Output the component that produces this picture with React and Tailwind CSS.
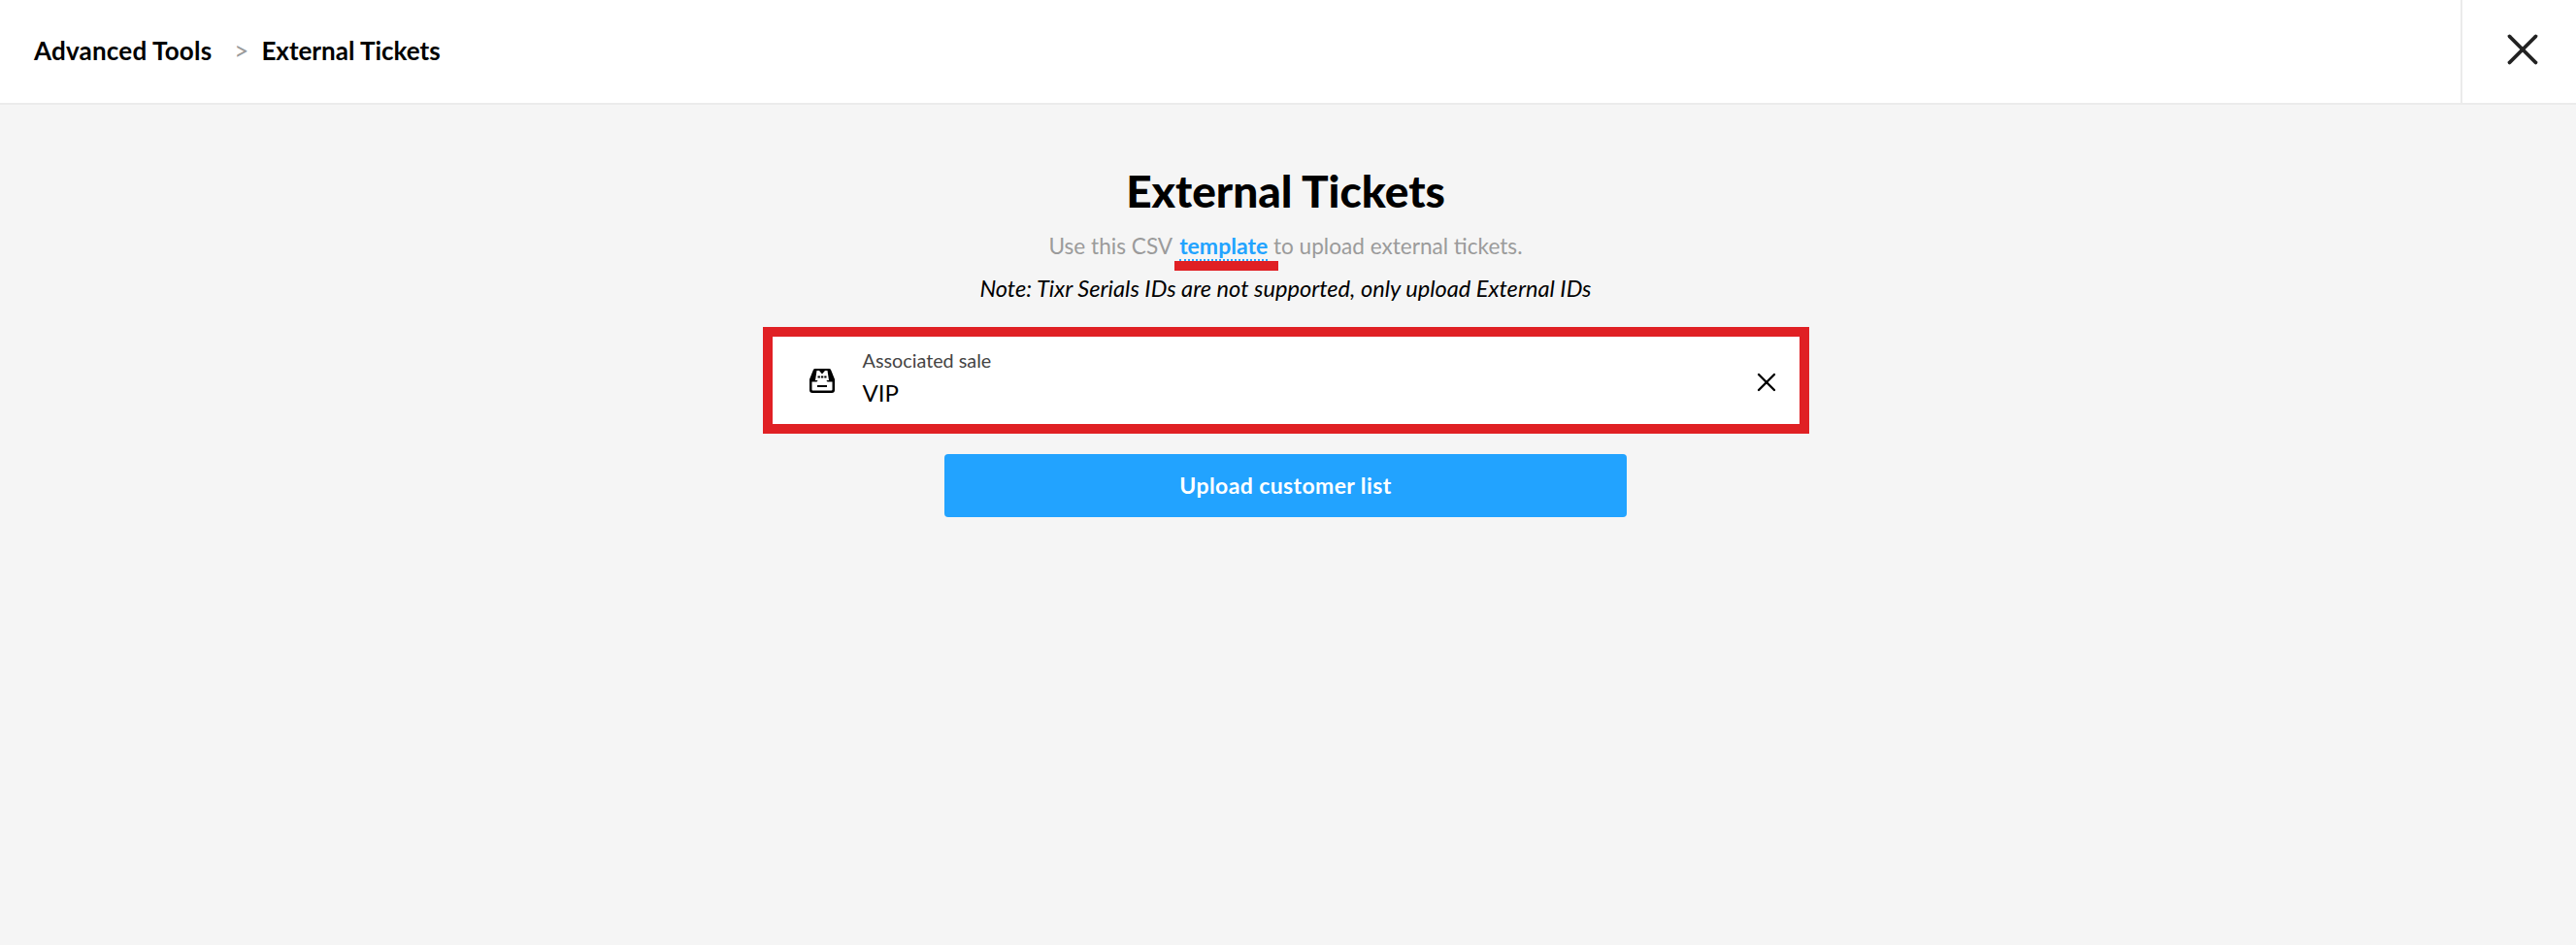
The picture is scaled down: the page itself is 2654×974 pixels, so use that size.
import { X } from "lucide-react";

function SaleIcon() {
  return (
    <svg width="28" height="26" viewBox="0 0 28 26" fill="none">
      <path d="M1 12 L5 2 Q5.5 1 7 1 H21 Q22.5 1 23 2 L27 12 V23 a3 3 0 0 1 -3 3 H4 a3 3 0 0 1 -3 -3 Z" fill="#000" />
      <path d="M8.5 3 H11 L14 6.5 L17 3 H19.5 L21 13 H7 Z" fill="#fff" />
      <path d="M3.5 14.5 H8.5 L10 12.5 H18 L19.5 14.5 H24.5 V22.5 a1 1 0 0 1 -1 1 H4.5 a1 1 0 0 1 -1 -1 Z" fill="#fff" />
      <path d="M9 19 H19" stroke="#000" strokeWidth="2" />
      <path d="M9.5 9.5 H18.5" stroke="#000" strokeWidth="2.2" strokeDasharray="2.4 1" />
    </svg>
  );
}

function App() {
  return (
    <div className="min-h-screen bg-[#f5f5f5] font-['Lato',sans-serif] text-black">
      <div className="h-[108px] bg-white border-b-2 border-[#ebebeb] flex items-center justify-between">
        <div className="flex items-center pl-[35px] pb-[2px] text-[26px] font-bold">
          <span className="tracking-[0.2px]">Advanced Tools</span>
          <span className="ml-[23px] mr-[13px] font-normal text-[#9b9b9b]">&gt;</span>
          <span>External Tickets</span>
        </div>
        <div className="h-full w-[119px] border-l-2 border-[#ebebeb] flex items-center justify-center pl-[7px] pb-[5px]">
          <X size={54} strokeWidth={1.7} className="text-[#222222]" />
        </div>
      </div>

      <div className="flex flex-col items-center pt-[66px] pr-[5px]">
        <h1 className="text-[46px] leading-[46px] font-black">External Tickets</h1>
        <p className="mt-[18px] text-[22.6px] leading-[30px] text-[#9b9b9b]">
          Use this CSV{" "}
          <span className="relative ml-[2px] text-[23px] font-bold text-[#22a3ff] border-b-2 border-dotted border-[#22a3ff]">
            template
            <span className="absolute left-[-5px] right-[-11px] top-[30px] h-[10px] bg-[#e02024]"></span>
          </span>{" "}
          to upload external tickets.
        </p>
        <p className="mt-[13px] text-[23.6px] leading-[30px] italic">
          Note: Tixr Serials IDs are not supported, only upload External IDs
        </p>

        <div className="mt-[25px] w-[1078px] h-[110px] border-[10px] border-[#e02024] bg-white flex items-center pl-[37px] pr-[18px]">
          <SaleIcon />
          <div className="ml-[28px] flex-1 pb-[6px]">
            <div className="text-[19.8px] leading-[24px] text-[#444444]">Associated sale</div>
            <div className="mt-[8px] text-[24px] leading-[28px]">VIP</div>
          </div>
          <X size={32} strokeWidth={1.8} className="text-black mt-[4px]" />
        </div>

        <button className="mt-[21px] w-[703px] h-[65px] rounded-[4px] bg-[#22a3ff] text-white text-[23px] tracking-[0.4px] font-bold">
          Upload customer list
        </button>
      </div>
    </div>
  );
}

export default App;
